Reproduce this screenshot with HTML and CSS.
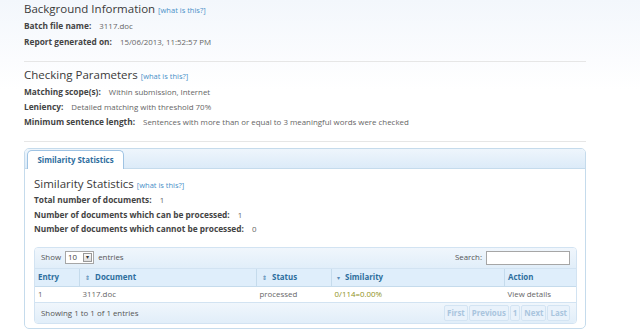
FILE: index.html
```html
<!DOCTYPE html>
<html lang="en">
<head>
    <meta charset="UTF-8">
    <title>Report</title>
    <link rel="stylesheet" href="styles.css">
</head>
<body>
    <div class="page">
        <div class="section">
            <h2 class="title">Background Information <a class="help" href="#">[what is this?]</a></h2>
            <div class="row tall"><span class="label">Batch file name:</span> <span class="value">3117.doc</span></div>
            <div class="row tall"><span class="label">Report generated on:</span> <span class="value">15/06/2013, 11:52:57 PM</span></div>
        </div>
        <hr class="rule first">
        <div class="section">
            <h2 class="title">Checking Parameters <a class="help" href="#">[what is this?]</a></h2>
            <div class="row"><span class="label">Matching scope(s):</span> <span class="value">Within submission, Internet</span></div>
            <div class="row"><span class="label">Leniency:</span> <span class="value">Detailed matching with threshold 70%</span></div>
            <div class="row"><span class="label">Minimum sentence length:</span> <span class="value">Sentences with more than or equal to 3 meaningful words were checked</span></div>
        </div>
        <hr class="rule second">

        <div class="tabs">
            <div class="tab-bar">
                <div class="tab">Similarity Statistics</div>
            </div>
            <div class="tab-body">
                <h2 class="title">Similarity Statistics <a class="help" href="#">[what is this?]</a></h2>
                <div class="row"><span class="label">Total number of documents:</span> <span class="value">1</span></div>
                <div class="row"><span class="label">Number of documents which can be processed:</span> <span class="value">1</span></div>
                <div class="row"><span class="label">Number of documents which cannot be processed:</span> <span class="value">0</span></div>

                <div class="grid">
                    <div class="grid-top">
                        <div class="length">Show <span class="select">10 <span class="arrow">&#9662;</span></span> entries</div>
                        <div class="search">Search: <input type="text"></div>
                    </div>
                    <table>
                        <thead>
                            <tr>
                                <th class="c-entry">Entry</th>
                                <th class="c-doc"><span class="sort">&#8661;</span> Document</th>
                                <th class="c-status"><span class="sort">&#8661;</span> Status</th>
                                <th class="c-sim"><span class="sort on">&#9662;</span> Similarity</th>
                                <th class="c-action">Action</th>
                            </tr>
                        </thead>
                        <tbody>
                            <tr>
                                <td>1</td>
                                <td>3117.doc</td>
                                <td>processed</td>
                                <td class="score">0/114=0.00%</td>
                                <td>View details</td>
                            </tr>
                        </tbody>
                    </table>
                    <div class="grid-bottom">
                        <div class="info">Showing 1 to 1 of 1 entries</div>
                        <div class="pager">
                            <span class="btn">First</span>
                            <span class="btn">Previous</span>
                            <span class="btn">1</span>
                            <span class="btn">Next</span>
                            <span class="btn">Last</span>
                        </div>
                    </div>
                </div>
            </div>
        </div>
    </div>
</body>
</html>
```

FILE: styles.css
```css
body {
    margin: 0;
    background: linear-gradient(#f3f7fc 0, #fbfcfe 60px, #ffffff 90px);
    background-repeat: no-repeat;
    font-family: "Open Sans", "DejaVu Sans", sans-serif;
    font-size: 7.9px;
    color: #555;
    min-height: 333px;
}
.page {
    width: 562px;
    margin-left: 24px;
}
.title {
    margin: 0;
    height: 18px;
    font-weight: normal;
    font-size: 11.5px;
    line-height: 18px;
    color: #3a3a3a;
    white-space: nowrap;
}
.help {
    font-size: 7.5px;
    color: #4a90c8;
    text-decoration: none;
}
.row {
    height: 15px;
    line-height: 15px;
    white-space: nowrap;
}
.row.tall {
    height: 16px;
    line-height: 16px;
}
.label {
    font-weight: bold;
    font-size: 8.3px;
    color: #444;
    margin-right: 6px;
}
.value {
    color: #666;
}
.rule {
    border: 0;
    height: 1px;
    background: #e6e6e6;
    margin: 0;
}
.rule.first {
    margin-top: 11px;
    margin-bottom: 4px;
}
.rule.second {
    margin-top: 12px;
    margin-bottom: 6px;
}

/* tab panel */
.tabs {
    border: 1px solid #c5dbec;
    border-radius: 5px;
    background: #fff;
    padding-bottom: 4px;
}
.tab-bar {
    height: 20px;
    padding: 2px 0 0 2px;
    box-sizing: border-box;
    background: linear-gradient(#eef5fc, #dcebf8);
    border-bottom: 1px solid #c5dbec;
    border-radius: 4px 4px 0 0;
    display: flex;
    align-items: flex-end;
}
.tab {
    height: 19px;
    box-sizing: border-box;
    width: 97px;
    margin-bottom: -1px;
    border: 1px solid #9fc3e3;
    border-bottom: 0;
    border-radius: 5px 5px 0 0;
    background: #fff;
    color: #2e6e9e;
    font-weight: bold;
    line-height: 18px;
    text-align: center;
}
.tab-body {
    padding: 6px 8px 0 9px;
}
.tab-body .row {
    height: 14.5px;
    line-height: 14.5px;
}

/* data table */
.grid {
    margin-top: 10px;
    border: 1px solid #d2e3f2;
    border-radius: 4px;
    overflow: hidden;
}
.grid-top, .grid-bottom {
    display: flex;
    justify-content: space-between;
    align-items: center;
    height: 20px;
    padding: 0 6px 0 6px;
    background: linear-gradient(#f0f6fc, #e1eef9);
}
.grid-top {
    border-bottom: 1px solid #d2e3f2;
}
.select {
    display: inline-block;
    width: 29px;
    height: 13px;
    box-sizing: border-box;
    border: 1px solid #a6a6a6;
    background: #fff;
    line-height: 11px;
    padding-left: 2px;
    margin: 0 2px;
    color: #444;
    vertical-align: middle;
    position: relative;
}
.arrow {
    position: absolute;
    right: 1px;
    top: 1px;
    width: 7px;
    height: 7px;
    border: 1px solid #999;
    background: linear-gradient(#fafafa, #ddd);
    font-size: 6px;
    line-height: 7px;
    text-align: center;
    color: #333;
}
.search input {
    width: 84px;
    height: 14px;
    box-sizing: border-box;
    border: 1px solid #a6a6a6;
    margin: 0 0 0 2px;
    padding: 0;
    vertical-align: middle;
}
table {
    width: 100%;
    border-collapse: collapse;
    table-layout: fixed;
}
th {
    height: 17px;
    padding: 0 3px;
    text-align: left;
    background: #dfeefb;
    color: #2e6e9e;
    font-weight: bold;
    border-right: 1px solid #c5dbec;
    border-bottom: 1px solid #c5dbec;
    white-space: nowrap;
}
th:last-child, td:last-child {
    border-right: 0;
}
.c-entry { width: 38px; }
.c-doc { width: 170px; }
.c-status { width: 68px; }
.c-sim { width: 166px; }
.sort {
    font-size: 6px;
    color: #5a8ab5;
    margin: 0 3px 0 2px;
}
td {
    height: 15px;
    padding: 0 3px;
    color: #666;
    background: #fff;
    border-bottom: 1px solid #d2e3f2;
    white-space: nowrap;
}
td.score {
    color: #8f9221;
}
.pager {
    display: flex;
    gap: 1px;
}
.btn {
    height: 14px;
    line-height: 14px;
    padding: 0 2px;
    border: 1px solid #d3e4f3;
    border-radius: 2px;
    background: #e9f2fb;
    color: #a9c5de;
    font-weight: bold;
}
```
